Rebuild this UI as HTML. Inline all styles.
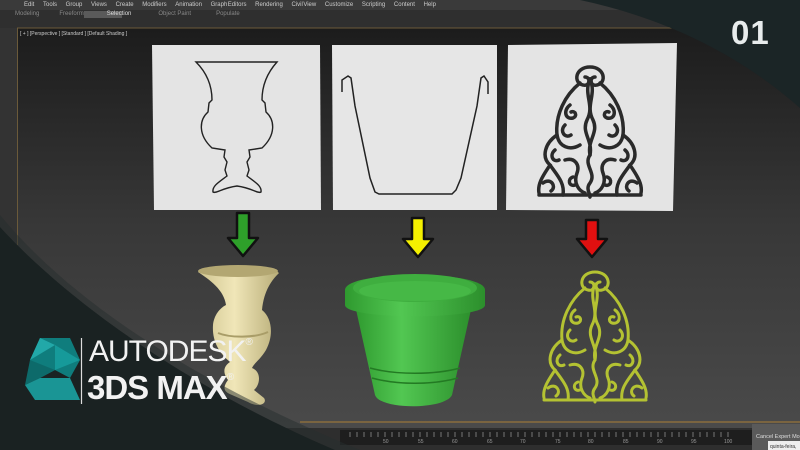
<!DOCTYPE html>
<html><head><meta charset="utf-8"><style>
html,body{margin:0;padding:0}
body{width:800px;height:450px;overflow:hidden;position:relative;background:#333;font-family:"Liberation Sans",sans-serif}
.abs{position:absolute}
</style></head><body>
<svg class="abs" style="left:0;top:0" width="800" height="450" viewBox="0 0 800 450">
<defs>
<linearGradient id="vp" x1="0" y1="0" x2="0" y2="1"><stop offset="0" stop-color="#1c1c1c"/><stop offset="0.5" stop-color="#383838"/><stop offset="1" stop-color="#4a4a4a"/></linearGradient>
<linearGradient id="cream" x1="0" y1="0" x2="1" y2="0"><stop offset="0" stop-color="#cfc48f"/><stop offset="0.45" stop-color="#f0e6b8"/><stop offset="1" stop-color="#b8ad78"/></linearGradient>
<linearGradient id="grn" x1="0" y1="0" x2="1" y2="0"><stop offset="0" stop-color="#2f9a2f"/><stop offset="0.4" stop-color="#52c752"/><stop offset="1" stop-color="#2c8f2c"/></linearGradient>
<g id="fil" fill="none" stroke-linecap="round">
<path d="M55 2 C40 2 38 18 48 20 C55 22 56 12 50 12 M55 2 C70 2 72 18 62 20 C55 22 54 12 60 12"/>
<path d="M45 18 C30 30 20 50 22 70 C24 82 35 86 45 80 M65 18 C80 30 90 50 88 70 C86 82 75 86 65 80"/>
<path d="M55 14 C48 30 60 40 52 55 C46 68 58 75 55 90 M55 14 C62 30 50 40 58 55 C64 68 52 75 55 90"/>
<path d="M35 40 C28 45 30 55 38 53 C43 51 40 45 36 47 M75 40 C82 45 80 55 72 53 C67 51 70 45 74 47"/>
<path d="M30 60 C24 66 30 74 36 70 M80 60 C86 66 80 74 74 70"/>
<path d="M22 70 C10 78 6 92 15 100 C10 108 2 118 4 128 M88 70 C100 78 104 92 95 100 C100 108 108 118 106 128"/>
<path d="M20 85 C14 90 18 98 24 95 M90 85 C96 90 92 98 86 95"/>
<path d="M15 100 C22 110 30 118 28 130 M95 100 C88 110 80 118 82 130"/>
<path d="M30 95 C40 92 45 100 42 108 C38 118 44 126 50 128 M80 95 C70 92 65 100 68 108 C72 118 66 126 60 128"/>
<path d="M8 118 C16 112 22 122 16 126 M102 118 C94 112 88 122 94 126"/>
<path d="M38 112 C32 114 34 122 40 120 M72 112 C78 114 76 122 70 120"/>
<path d="M55 90 C48 100 62 108 55 118 C50 124 56 130 55 132"/>
<path d="M4 130 L106 130"/>
</g>
</defs>
<rect x="0" y="0" width="800" height="450" fill="#2e2e2e"/>
<rect x="0" y="0" width="800" height="10" fill="#3a3a3a"/>
<rect x="0" y="10" width="800" height="18" fill="#2f2f2f"/>
<rect x="84" y="11" width="38" height="7" fill="#5a5a5a"/>
<rect x="17" y="28" width="783" height="400" fill="url(#vp)"/>
<line x1="17" y1="28" x2="800" y2="28" stroke="#6b5a3a" stroke-width="1"/>
<line x1="17.5" y1="28" x2="17.5" y2="245" stroke="#6b5a3a" stroke-width="1"/>
<rect x="0" y="28" width="17" height="400" fill="#333"/>
<polygon points="152,45 320,45 321,210 154,210" fill="#e4e4e4"/>
<polygon points="332,45 497,45 497,210 333,210" fill="#e6e6e6"/>
<polygon points="508,45 677,43 673,211 506,210" fill="#e4e4e4"/>
<path d="M196 62 L277 62 C268 72 262 85 262 100 L265 103 L266 112 C275 120 276 135 262 148 L249 150 L250 157 L247 162 L249 170 L247 176 C255 182 262 186 261 192 C258 194 252 188 237 186 C222 188 216 194 213 192 C212 186 219 182 227 176 L225 170 L227 162 L224 157 L225 150 L212 148 C198 135 199 120 208 112 L209 103 L212 100 C212 85 206 72 196 62 Z" fill="none" stroke="#222" stroke-width="1.4"/>
<path d="M342 92 L342 80 L348 76 L351 78 L355 106 L370 178 L375 192 L379 194 L452 194 L456 190 L461 178 L477 106 L481 78 L484 76 L488 82 L488 94" fill="none" stroke="#222" stroke-width="1.5"/>
<use href="#fil" transform="translate(535,65)" stroke="#2a2a2a" stroke-width="3.5"/>
<path d="M237 213 L249 213 L249 238 L258 238 L243 256 L228 238 L237 238 Z" fill="#2ea02a" stroke="#111" stroke-width="2.5" stroke-linejoin="round"/>
<path d="M412 218 L424 218 L424 239 L433 239 L418 257 L403 239 L412 239 Z" fill="#f4f000" stroke="#111" stroke-width="2.5" stroke-linejoin="round"/>
<path d="M586 220 L598 220 L598 239 L607 239 L592 257 L577 239 L586 239 Z" fill="#e01010" stroke="#111" stroke-width="2.5" stroke-linejoin="round"/>
<path d="M198 272 C210 266 270 264 279 273 C272 280 264 290 262 310 C272 318 274 335 266 350 C260 360 255 362 252 368 C262 372 260 385 254 390 L264 398 C268 404 258 408 248 402 L232 395 C224 392 222 388 228 380 C222 372 224 366 230 362 C218 352 212 340 213 325 C214 315 220 308 226 305 C224 290 210 280 198 272 Z" fill="url(#cream)"/>
<ellipse cx="238" cy="271" rx="40" ry="6" fill="#b3a772"/>
<path d="M218 333 C230 338 255 338 268 332" stroke="#a99d68" stroke-width="2" fill="none"/>
<path d="M355 305 L375 395 C380 410 445 410 452 395 L472 305 Z" fill="url(#grn)"/>
<path d="M345 290 C345 270 485 270 485 290 L485 305 C485 320 345 320 345 305 Z" fill="url(#grn)"/>
<ellipse cx="415" cy="288" rx="62" ry="14" fill="#3fae3f"/>
<ellipse cx="415" cy="291" rx="56" ry="10" fill="#46b846"/>
<path d="M370 368 C395 375 435 375 460 368 M372 378 C397 385 433 385 458 378" stroke="#237a23" stroke-width="1.5" fill="none"/>
<use href="#fil" transform="translate(540,270)" stroke="#b4c232" stroke-width="3"/>
<rect x="300" y="421" width="500" height="2" fill="#7a6440"/>
<rect x="340" y="430" width="412" height="15" fill="#1e1e1e"/>
<g stroke="#777" stroke-width="1">
<path d="M350 432v5M357 432v5M364 432v5M371 432v5M378 432v5M385 432v5M392 432v5M399 432v5M406 432v5M413 432v5M420 432v5M427 432v5M434 432v5M441 432v5M448 432v5M455 432v5M462 432v5M469 432v5M476 432v5M483 432v5M490 432v5M497 432v5M504 432v5M511 432v5M518 432v5M525 432v5M532 432v5M539 432v5M546 432v5M553 432v5M560 432v5M567 432v5M574 432v5M581 432v5M588 432v5M595 432v5M602 432v5M609 432v5M616 432v5M623 432v5M630 432v5M637 432v5M644 432v5M651 432v5M658 432v5M665 432v5M672 432v5M679 432v5M686 432v5M693 432v5M700 432v5M707 432v5M714 432v5M721 432v5M728 432v5"/>
</g>
<g fill="#999" font-size="5" font-family="Liberation Sans">
<text x="383" y="443">50</text><text x="418" y="443">55</text><text x="452" y="443">60</text><text x="487" y="443">65</text><text x="520" y="443">70</text><text x="555" y="443">75</text><text x="588" y="443">80</text><text x="623" y="443">85</text><text x="657" y="443">90</text><text x="691" y="443">95</text><text x="724" y="443">100</text>
</g>
<rect x="752" y="424" width="48" height="26" fill="#5a5a5a"/>
<text x="756" y="438" fill="#ddd" font-size="5.5">Cancel Expert Mode</text>
<rect x="768" y="441" width="32" height="9" fill="#eee"/>
<text x="770" y="448" fill="#333" font-size="5">quinta-feira,</text>
<path d="M0 227 C50 282 160 375 335 450 L0 450 Z" fill="#1a2222"/>
<path d="M0 227 C50 282 160 375 335 450 L360 450 C190 380 70 300 0 215 Z" fill="#262e2e" opacity="0.5"/>
<path d="M580 0 C665 18 740 55 800 108 L800 0 Z" fill="#1b2526"/>
<polygon points="40,338 70,338 80,360 70,378 55,370 40,378 30,360" fill="#0f7d7d"/>
<polygon points="55,345 80,360 55,370" fill="#169a9a"/>
<polygon points="30,360 55,370 40,378 25,385" fill="#0d6a6a"/>
<polygon points="25,385 40,378 70,378 80,400 35,400" fill="#1a9595"/>
<polygon points="40,338 55,345 30,360" fill="#22a8a8"/>
<line x1="81.5" y1="338" x2="81.5" y2="404" stroke="#ddd" stroke-width="1.2"/>
</svg>
<div class="abs" style="left:24px;top:2px;font-size:6px;color:#ccc;word-spacing:7px;white-space:nowrap">Edit&nbsp;Tools&nbsp;Group&nbsp;Views&nbsp;Create&nbsp;Modifiers&nbsp;Animation&nbsp;Graph&#8202;Editors&nbsp;Rendering&nbsp;Civil&#8202;View&nbsp;Customize&nbsp;Scripting&nbsp;Content&nbsp;Help</div>
<div class="abs" style="left:15px;top:11px;font-size:6px;color:#888;white-space:nowrap"><span style="margin-right:20px">Modeling</span><span style="margin-right:23px">Freeform</span><span style="color:#ddd;margin-right:27px">Selection</span><span style="margin-right:25px">Object Paint</span><span>Populate</span></div>
<div class="abs" style="left:20px;top:31px;font-size:5px;color:#ccc;white-space:nowrap">[ + ] [Perspective ] [Standard ] [Default Shading ]</div>
<div class="abs" style="left:731px;top:14px;font-size:33px;font-weight:bold;color:#e8ecec;letter-spacing:1px">01</div>
<div class="abs" style="left:89px;top:335px;font-size:30px;color:#f2f2f2;letter-spacing:-1px">AUTODESK<sup style="font-size:10px;vertical-align:top;position:relative;top:2px">®</sup></div>
<div class="abs" style="left:87px;top:369px;font-size:33px;font-weight:bold;color:#f2f2f2;letter-spacing:-1px">3DS MAX<sup style="font-size:10px;vertical-align:top;font-weight:normal;position:relative;top:3px">®</sup></div>
</body></html>
